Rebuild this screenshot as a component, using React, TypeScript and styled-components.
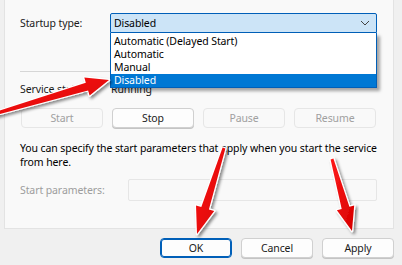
import React from "react";
import styled, { createGlobalStyle } from "styled-components";

const Global = createGlobalStyle`
  html, body { margin: 0; padding: 0; background: #f0f0f0; }
  body { font-family: "Noto Sans", "Open Sans", sans-serif; font-size: 10.5px; letter-spacing: -0.1px; color: #000; }
`;

const Page = styled.div`
  position: relative;
  width: 402px;
  height: 265px;
  overflow: hidden;
  background: #f0f0f0;
  display: flex;
  flex-direction: column;
`;

const Panel = styled.div`
  margin-left: 4px;
  width: 390px;
  height: 229px;
  box-sizing: border-box;
  background: #f9f9f9;
  border: 1px solid #e3e3e3;
  border-top: none;
  padding: 13px 0 0 15px;
  display: flex;
  flex-direction: column;
`;

const FieldRow = styled.div<{ $labelW: number; $h: number }>`
  display: grid;
  grid-template-columns: ${(p) => p.$labelW}px 1fr;
  align-items: center;
  height: ${(p) => p.$h}px;
  width: 357px;
`;

const Label = styled.span<{ $disabled?: boolean }>`
  color: ${(p) => (p.$disabled ? "#9d9d9d" : "#1a1a1a")};
  white-space: nowrap;
`;

const SelectWrap = styled.div`
  position: relative;
  height: 20px;
`;

const SelectBox = styled.div`
  box-sizing: border-box;
  height: 20px;
  background: #cce4f7;
  border: 1px solid #005fb8;
  border-radius: 2px 2px 0 0;
  display: flex;
  align-items: center;
  justify-content: space-between;
  padding: 0 6px 0 3px;
`;

const DropList = styled.ul`
  position: absolute;
  left: 0;
  right: 0;
  top: 20px;
  margin: 0;
  padding: 2px 0 0;
  list-style: none;
  background: #fff;
  border: 1px solid #005fb8;
  border-top: none;
  box-shadow: 3px 3px 3px rgba(0, 0, 0, 0.35);
  z-index: 2;
`;

const DropItem = styled.li<{ $selected?: boolean }>`
  height: 13px;
  line-height: 13px;
  padding-left: 3px;
  background: ${(p) => (p.$selected ? "#0078d4" : "transparent")};
  color: ${(p) => (p.$selected ? "#fff" : "#000")};
  white-space: nowrap;
`;

const Separator = styled.div`
  width: 357px;
  height: 1px;
  background: #d6d6d6;
  margin-top: 38px;
`;

const StatusRow = styled(FieldRow)`
  margin-top: 10px;
`;

const ButtonGrid = styled.div`
  display: grid;
  grid-template-columns: repeat(4, 82px);
  column-gap: 9px;
  margin: 12px 0 0 1px;
`;

const Btn = styled.button<{ $disabled?: boolean; $primary?: boolean }>`
  box-sizing: border-box;
  height: 20px;
  padding: 0;
  font: inherit;
  letter-spacing: inherit;
  border-radius: 4px;
  background: ${(p) => (p.$disabled ? "#f9f9f9" : "#fdfdfd")};
  border: ${(p) =>
    p.$primary ? "1px solid #005fb8" : p.$disabled ? "1px solid #e6e6e6" : "1px solid #d0d0d0"};
  box-shadow: ${(p) => (p.$primary ? "inset 0 0 0 1px #005fb8" : p.$disabled ? "none" : "0 1px 0 #c4c4c4")};
  color: ${(p) => (p.$disabled ? "#a0a0a0" : "#1a1a1a")};
  display: flex;
  align-items: center;
  justify-content: center;
`;

const Para = styled.p`
  margin: 13px 0 0;
  line-height: 14px;
  width: 360px;
`;

const ParamRow = styled(FieldRow)`
  margin-top: 10px;
`;

const ParamInput = styled.div`
  box-sizing: border-box;
  height: 22px;
  border: 1px solid #e6e6e6;
  border-radius: 2px;
  background: #f9f9f9;
`;

const Footer = styled.div`
  display: flex;
  gap: 9px;
  padding: 9px 0 0 160px;
`;

const FooterBtn = styled(Btn)`
  width: 72px;
`;

const Overlay = styled.svg`
  position: absolute;
  left: 0;
  top: 0;
  pointer-events: none;
  z-index: 5;
`;

type Pt = [number, number];

function arrowPoints(tail: Pt, tip: Pt, tailW: number, neckW: number, headW: number, headL: number) {
  const dx = tip[0] - tail[0];
  const dy = tip[1] - tail[1];
  const L = Math.hypot(dx, dy);
  const ux = dx / L;
  const uy = dy / L;
  const nx = -uy;
  const ny = ux;
  const bx = tip[0] - ux * headL;
  const by = tip[1] - uy * headL;
  const pts: Pt[] = [
    [tail[0] + (nx * tailW) / 2, tail[1] + (ny * tailW) / 2],
    [bx + (nx * neckW) / 2, by + (ny * neckW) / 2],
    [bx + (nx * headW) / 2, by + (ny * headW) / 2],
    tip,
    [bx - (nx * headW) / 2, by - (ny * headW) / 2],
    [bx - (nx * neckW) / 2, by - (ny * neckW) / 2],
    [tail[0] - (nx * tailW) / 2, tail[1] - (ny * tailW) / 2],
  ];
  return pts.map((p) => `${p[0].toFixed(1)},${p[1].toFixed(1)}`).join(" ");
}

const arrows = [
  { tail: [-6, 114] as Pt, tip: [109, 80] as Pt, tw: 3, nw: 8, hw: 19, hl: 23 },
  { tail: [224, 148] as Pt, tip: [197, 234] as Pt, tw: 3, nw: 8, hw: 19, hl: 27 },
  { tail: [332, 159] as Pt, tip: [352, 231] as Pt, tw: 3, nw: 8, hw: 18, hl: 24 },
];

const Chevron = () => (
  <svg width="10" height="6" viewBox="0 0 10 6">
    <path d="M1 1 L5 5 L9 1" fill="none" stroke="#444" strokeWidth="1" />
  </svg>
);

export default function App() {
  return (
    <>
      <Global />
      <Page>
        <Panel>
          <FieldRow $labelW={90} $h={20}>
            <Label>Startup type:</Label>
            <SelectWrap>
              <SelectBox>
                <span>Disabled</span>
                <Chevron />
              </SelectBox>
              <DropList>
                <DropItem>Automatic (Delayed Start)</DropItem>
                <DropItem>Automatic</DropItem>
                <DropItem>Manual</DropItem>
                <DropItem $selected>Disabled</DropItem>
              </DropList>
            </SelectWrap>
          </FieldRow>
          <Separator />
          <StatusRow $labelW={91} $h={14}>
            <Label>Service status:</Label>
            <Label>Running</Label>
          </StatusRow>
          <ButtonGrid>
            <Btn $disabled>Start</Btn>
            <Btn>Stop</Btn>
            <Btn $disabled>Pause</Btn>
            <Btn $disabled>Resume</Btn>
          </ButtonGrid>
          <Para>
            You can specify the start parameters that apply when you start the service from here.
          </Para>
          <ParamRow $labelW={108} $h={22}>
            <Label $disabled>Start parameters:</Label>
            <ParamInput />
          </ParamRow>
        </Panel>
        <Footer>
          <FooterBtn $primary>OK</FooterBtn>
          <FooterBtn>Cancel</FooterBtn>
          <FooterBtn>Apply</FooterBtn>
        </Footer>
        <Overlay width="402" height="265" viewBox="0 0 402 265">
          <defs>
            <filter id="sh" x="-20%" y="-20%" width="140%" height="140%">
              <feDropShadow dx="2" dy="2" stdDeviation="1.6" floodColor="#000" floodOpacity="0.45" />
            </filter>
            <linearGradient id="rg" x1="0" y1="0" x2="1" y2="1">
              <stop offset="0" stopColor="#ff1a1a" />
              <stop offset="1" stopColor="#d60000" />
            </linearGradient>
          </defs>
          {arrows.map((a, i) => (
            <polygon
              key={i}
              points={arrowPoints(a.tail, a.tip, a.tw, a.nw, a.hw, a.hl)}
              fill="url(#rg)"
              stroke="#fff"
              strokeWidth="2.5"
              strokeLinejoin="round"
              paintOrder="stroke"
              filter="url(#sh)"
            />
          ))}
        </Overlay>
      </Page>
    </>
  );
}
